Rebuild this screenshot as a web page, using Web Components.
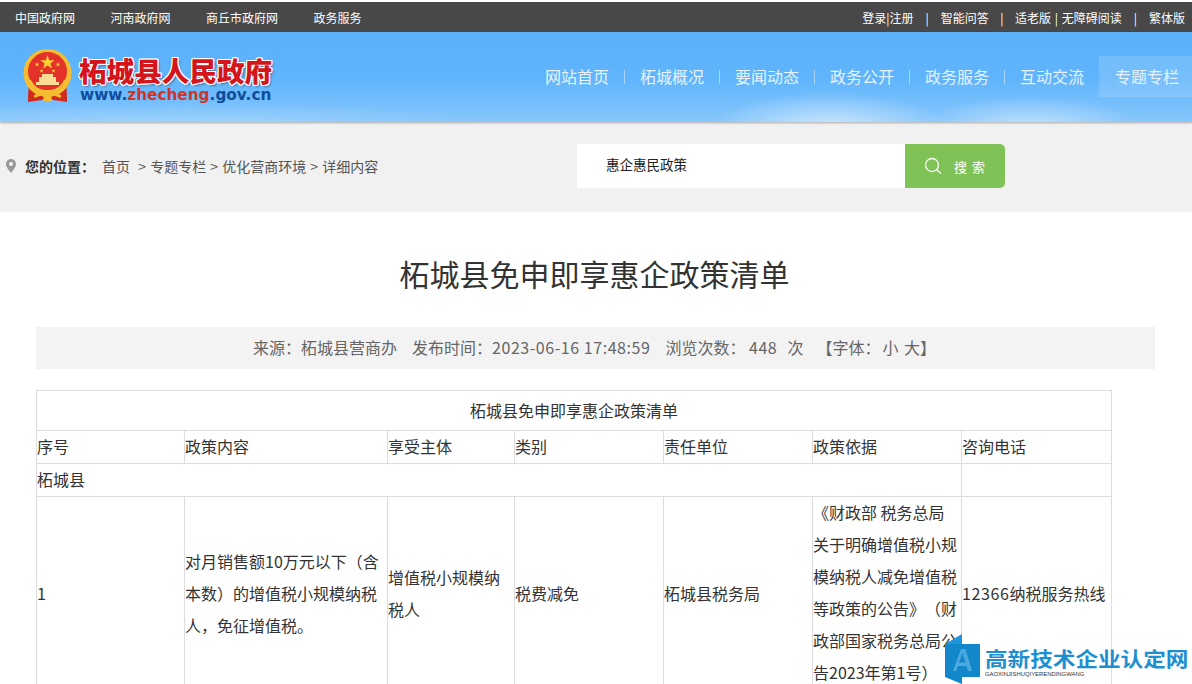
<!DOCTYPE html>
<html lang="zh"><head><meta charset="utf-8"><title>柘城县人民政府</title>
<style>
html,body{margin:0;padding:0;height:684px;overflow:hidden;background:#fff;font-family:"Noto Sans CJK SC","Liberation Sans",sans-serif;color:#333;text-spacing-trim:space-all}
</style></head><body>
<gov-topbar></gov-topbar>
<gov-header></gov-header>
<gov-locbar></gov-locbar>
<gov-article></gov-article>
<gov-watermark></gov-watermark>
<script>
function def(name,html){
  customElements.define(name,class extends HTMLElement{
    constructor(){super();this.attachShadow({mode:'open'}).innerHTML=html;}
  });
}
def('gov-topbar',`<style>
:host{display:flex;justify-content:space-between;align-items:center;height:30px;margin-top:2px;background:#484848;color:#fff;font-size:12px;padding:0 7px 0 15px;box-sizing:border-box;white-space:nowrap}
.l{display:flex;gap:35.5px}
.r{display:flex;align-items:center}
i{font-style:normal;margin:0 12px}
i.a{margin:0 11.500px}
.w{word-spacing:1px}
</style>
<div class="l"><span>中国政府网</span><span>河南政府网</span><span>商丘市政府网</span><span>政务服务</span></div>
<div class="r"><span>登录|注册</span><i>|</i><span>智能问答</span><i class="a">|</i><span class="w">适老版 | 无障碍阅读</span><i>|</i><span>繁体版</span></div>`);
def('gov-header',`<style>
:host{display:flex;justify-content:space-between;height:90px;box-sizing:border-box;
background:
 radial-gradient(ellipse 110px 30px at 1030px 94px,rgba(214,236,252,.7),transparent),
 radial-gradient(ellipse 120px 36px at 830px 96px,rgba(214,236,252,.85),transparent),
 radial-gradient(ellipse 320px 24px at 180px 94px,rgba(190,226,252,.5),transparent),
 linear-gradient(#5bb2fb 0,#5fb4fb 50%,#86c6fb 100%);
box-shadow:0 1px 2px rgba(0,0,0,.35);position:relative}
.logo{display:flex;align-items:flex-start;padding:17px 0 0 22px;gap:7px}
.t{display:flex;flex-direction:column}
.cn{font-size:27.600px;line-height:34px;font-weight:900;color:#d4161c;white-space:nowrap;margin-top:4px;
text-shadow:1px 0 #fff,-1px 0 #fff,0 1px #fff,0 -1px #fff,1px 1px #fff,-1px 1px #fff,1px -1px #fff,-1px -1px #fff,2px 2px 2px rgba(0,0,0,.35)}
.en{font:bold 15.300px/17px "DejaVu Sans",sans-serif;color:#0f4d9b;white-space:nowrap;margin:0 0 0 1px}
.en b{color:#c9382a}
nav{display:flex;align-items:flex-start;padding-top:24px;font-size:16px;color:#e6f3ff}
nav a{display:block;height:41px;line-height:41px;padding:0 15.5px;position:relative;white-space:nowrap}
nav a+a::before{content:"";position:absolute;left:0;top:14px;height:14px;width:1px;background:rgba(255,255,255,.45)}
nav a.on{background:rgba(255,255,255,.14);padding-right:13px}
nav a.on::before{display:none}
</style>
<div class="logo">
<svg width="50" height="55" viewBox="0 0 50 55">
<path d="M7 36 C6 42 6 48 6 53 L20 51 L25.500 47 L31 51 L45 53 C45 48 45 42 44 36Z" fill="#cf2a20"/>
<circle cx="25.500" cy="24" r="24" fill="#f5bd2f"/>
<circle cx="25.500" cy="22.500" r="19.500" fill="#e3322a"/>
<path d="M25.500 6l1.700 5.200h5.500l-4.400 3.200 1.700 5.200-4.500-3.200-4.500 3.200 1.700-5.200-4.400-3.200h5.500z" fill="#f9d130"/>
<path d="M15 13l.6 1.700h1.800l-1.500 1.100.6 1.700-1.500-1-1.500 1 .6-1.700-1.500-1.100h1.800zM36 13l.6 1.700h1.800l-1.500 1.100.6 1.700-1.500-1-1.500 1 .6-1.700-1.500-1.100h1.800zM19.500 20l.5 1.300h1.400l-1.100.9.4 1.400-1.200-.8-1.200.8.4-1.400-1.100-.9H19zM31.500 20l.5 1.300h1.400l-1.100.9.4 1.400-1.200-.8-1.200.8.4-1.400-1.100-.9H31z" fill="#f9d130"/>
<path d="M14 33h23v3H14zM17 28h17v5H17zM20 25h11v3H20z" fill="#f8dc94"/>
<path d="M3 30 C6 42 16 47 25.500 47 C35 47 45 42 48 30 L42 31 C38 39 32 41 25.500 41 C19 41 13 39 9 31Z" fill="#f5bd2f"/>
<path d="M21.500 44h8v8h-8zM12 46l6-2v3l-6 2zM39 46l-6-2v3l6 2z" fill="#f5bd2f"/>
</svg>
<div class="t"><span class="cn">柘城县人民政府</span><span class="en">www.<b>zhecheng</b>.gov.cn</span></div>
</div>
<nav><a>网站首页</a><a>柘城概况</a><a>要闻动态</a><a>政务公开</a><a>政务服务</a><a>互动交流</a><a class="on">专题专栏</a></nav>`);
def('gov-locbar',`<style>
:host{display:flex;align-items:flex-start;height:89px;margin-top:1px;background:#f1f1f1;font-size:14px;color:#555;white-space:nowrap}
.crumb{display:flex;align-items:center;padding:33px 0 0 6px;width:577px;box-sizing:border-box;line-height:20px}
.pin{margin-right:9px}
b{color:#333;width:77px;flex:none}
.path{word-spacing:1px}
.s{display:flex;margin-top:21px;height:44px}
.inp{width:328px;background:#fff;font-size:13.500px;line-height:41px;color:#222;padding-left:29px;box-sizing:border-box}
.btn{width:100px;background:#7fc256;border-radius:0 5px 5px 0;color:#fff;display:flex;align-items:center;justify-content:center;gap:12px;font-size:13px;letter-spacing:5px;padding-left:4px;box-sizing:border-box}
</style>
<div class="crumb"><svg class="pin" width="10" height="14" viewBox="0 0 10 14"><path d="M5 0C2.200 0 0 2.200 0 5c0 3.500 5 9 5 9s5-5.500 5-9C10 2.200 7.800 0 5 0zm0 7a2 2 0 110-4 2 2 0 010 4z" fill="#999"/></svg><b>您的位置：</b><span class="path">首页 &nbsp;&gt; 专题专栏 &gt; 优化营商环境 &gt; 详细内容</span></div>
<div class="s"><div class="inp">惠企惠民政策</div><div class="btn"><svg width="18" height="18" viewBox="0 0 18 18" fill="none" stroke="#fff" stroke-width="1.300"><circle cx="8" cy="8" r="6.500"/><path d="M12.700 12.700L17 16.500"/></svg><span>搜索</span></div></div>`);
def('gov-article',`<style>
:host{display:block;padding:0 37px 0 36px;color:#333}
h1{margin:0;padding:37px 2px 0 0;height:78px;text-align:center;font-size:30px;font-weight:400;line-height:48px;color:#333}
.meta{height:42px;background:#f3f3f3;display:flex;gap:15px;line-height:40px;font-size:16px;color:#666;white-space:nowrap;padding-left:217px;box-sizing:border-box}
.d{letter-spacing:.55px}
.z{margin-left:3px}
.y{margin-left:2px;word-spacing:2px}
.wrap{margin-top:21px}
table{border-collapse:collapse;table-layout:fixed;width:1075px;font-size:16px;color:#333}
td{border:1px solid #ddd;padding:0 0 2px;line-height:30px;vertical-align:middle;box-sizing:border-box}
tr.h td{height:33px}
.c{text-align:center;height:40px}
.long td{line-height:32px}
.top{margin-top:-1px}
.p{letter-spacing:.6px}
</style>
<h1>柘城县免申即享惠企政策清单</h1>
<div class="meta"><span>来源：柘城县营商办</span><span>发布时间：<span class="d">2023-06-16 17:48:59</span></span><span>浏览次数： <span class="d">448</span> &nbsp;<span class="z">次</span></span><span style="margin-left:-2px">【字体：<span class="y">小 大</span>】</span></div>
<div class="wrap"><table>
<colgroup><col style="width:148px"><col style="width:203px"><col style="width:127px"><col style="width:149px"><col style="width:149px"><col style="width:149px"><col style="width:150px"></colgroup>
<tr><td colspan="7" class="c">柘城县免申即享惠企政策清单</td></tr>
<tr class="h"><td>序号</td><td>政策内容</td><td>享受主体</td><td>类别</td><td>责任单位</td><td>政策依据</td><td>咨询电话</td></tr>
<tr class="h"><td colspan="6">柘城县</td><td></td></tr>
<tr class="long"><td>1</td><td>对月销售额10万元以下（含本数）的增值税小规模纳税人，免征增值税。</td><td>增值税小规模纳税人</td><td>税费减免</td><td>柘城县税务局</td><td><div class="top">《财政部 税务总局<br>关于明确增值税小规模纳税人减免增值税等政策的公告》（财政部国家税务总局公告2023年第1号）</div></td><td><span class="p">12366</span>纳税服务热线</td></tr>
</table></div>`);
def('gov-watermark',`<style>
:host{position:absolute;left:945px;top:634px;width:247px;height:50px;display:block;overflow:hidden}
.row{display:flex}
.txt{margin:13px 0 0 5px;display:flex;flex-direction:column}
.b{font-size:20px;line-height:24px;font-weight:700;color:#1d8fd1;white-space:nowrap;display:inline-block;transform:scaleX(1.130);transform-origin:0 50%}
.s{font:5.900px/8px "Liberation Sans",sans-serif;color:#333;white-space:nowrap;margin-top:-1px}
</style>
<div class="row"><svg width="35" height="50" viewBox="0 0 35 50" style="flex:none"><path d="M0 10L17 0V10z" fill="#1d95d8"/><path d="M0 10H35V43H17V50L0 43z" fill="#1287c9"/><path d="M8 37L16 15h4.500L27 37h-4l-1.500-5h-8.500l-2 5zM14 28.500h6.500L17.500 19z" fill="#4ba9df"/></svg>
<div class="txt"><span class="b">高新技术企业认定网</span><span class="s">GAOXINJISHUQIYERENDINGWANG</span></div></div>`);
</script>
</body></html>
